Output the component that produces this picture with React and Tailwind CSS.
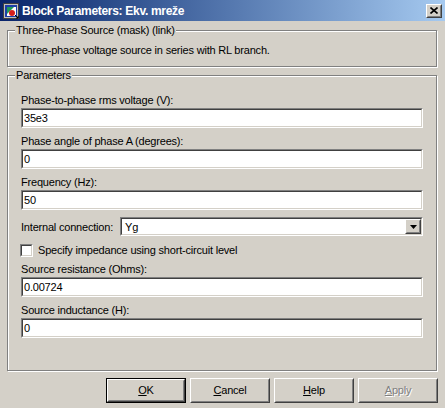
import React from 'react';

const font = { fontFamily: '"Liberation Sans", Arial, sans-serif' };

function Sunken({ className = '', children }) {
    return (
        <div className={`border border-t-[#808080] border-l-[#808080] border-r-white border-b-white ${className}`}>
            <div className="h-full border border-t-[#404040] border-l-[#404040] border-r-[#d4d0c8] border-b-[#d4d0c8] bg-white flex items-center">
                {children}
            </div>
        </div>
    );
}

function Raised({ className = '', children }) {
    return (
        <div className={`border border-t-white border-l-white border-r-[#404040] border-b-[#404040] bg-[#d4d0c8] ${className}`}>
            <div className="h-full border border-t-[#d4d0c8] border-l-[#d4d0c8] border-r-[#808080] border-b-[#808080] flex items-center justify-center">
                {children}
            </div>
        </div>
    );
}

function Field({ label, value, className = '' }) {
    return (
        <div className={className}>
            <div className="h-[15px] leading-[14px]">{label}</div>
            <Sunken className="h-[20px]">
                <span className="pl-[1px] leading-[14px]">{value}</span>
            </Sunken>
        </div>
    );
}

function Group({ title, className = '', children }) {
    return (
        <div className={`relative border border-[#808080] shadow-[inset_1px_1px_0_#fff,1px_1px_0_#fff] ${className}`}>
            <span className="absolute -top-[8px] left-[7px] px-px bg-[#d4d0c8] leading-[14px]">{title}</span>
            {children}
        </div>
    );
}

function Button({ children, isDefault, disabled }) {
    const inner = (
        <Raised className="h-full w-full">
            <span className={disabled ? 'text-[#808080] [text-shadow:1px_1px_0_#fff]' : ''}>{children}</span>
        </Raised>
    );
    return isDefault ? (
        <div className="w-[80px] h-[25px] border border-black">{inner}</div>
    ) : (
        <div className="w-[80px] h-[25px]">{inner}</div>
    );
}

function BlockIcon() {
    return (
        <svg width="16" height="16" viewBox="0 0 16 16">
            <rect x="0.5" y="0.5" width="15" height="15" fill="#c0c0c0" stroke="#404040" />
            <rect x="2" y="2" width="12" height="12" fill="#1c3fa8" />
            <rect x="4" y="4" width="9" height="9" fill="#fff" />
            <path d="M4 4 L11 4 L4 11 Z" fill="#1f9a5a" />
            <circle cx="9" cy="10" r="3" fill="#d8201c" />
            <path d="M12 12 L15 15 M13 15 L15 15 L15 13" stroke="#000" strokeWidth="1" fill="none" />
        </svg>
    );
}

export default function App() {
    return (
        <div className="w-[445px] h-[408px] bg-[#d4d0c8] text-[11px] tracking-[-0.2px] text-black flex flex-col overflow-hidden" style={font}>
            <div className="h-[21px] shrink-0 flex items-center bg-linear-to-r from-[#0a246a] to-[#a6caf0] pl-[3px] pr-[3px]">
                <BlockIcon />
                <span className="ml-[3px] text-white font-bold text-[12px] tracking-[-0.3px] leading-[14px]">Block Parameters: Ekv. mreže</span>
                <Raised className="ml-auto w-[16px] h-[14px]">
                    <svg width="8" height="7" viewBox="0 0 8 7">
                        <path d="M0.5 0.5 L7.5 6.5 M7.5 0.5 L0.5 6.5" stroke="#000" strokeWidth="1.6" />
                    </svg>
                </Raised>
            </div>

            <Group title="Three-Phase Source (mask) (link)" className="mt-[9px] ml-[7px] mr-[8px] h-[37px]">
                <div className="pl-[12px] pt-[12px] leading-[14px]">Three-phase voltage source in series with RL branch.</div>
            </Group>

            <Group title="Parameters" className="mt-[8px] ml-[7px] mr-[8px] h-[296px] px-[13px] pt-[17px]">
                <Field label="Phase-to-phase rms voltage (V):" value="35e3" />
                <Field label="Phase angle of phase A (degrees):" value="0" className="mt-[6px]" />
                <Field label="Frequency (Hz):" value="50" className="mt-[6px]" />

                <div className="mt-[7px] flex items-center">
                    <span className="w-[99px] leading-[14px]">Internal connection:</span>
                    <Sunken className="flex-1 h-[19px]">
                        <span className="pl-[3px] leading-[14px]">Yg</span>
                        <Raised className="ml-auto w-[16px] h-full">
                            <svg width="7" height="4" viewBox="0 0 7 4">
                                <path d="M0 0 L7 0 L3.5 4 Z" fill="#000" />
                            </svg>
                        </Raised>
                    </Sunken>
                </div>

                <div className="mt-[7px] flex items-center h-[14px]">
                    <Sunken className="w-[13px] h-[13px] -ml-px" />
                    <span className="ml-[5px] leading-[14px]">Specify impedance using short-circuit level</span>
                </div>

                <Field label="Source resistance (Ohms):" value="0.00724" className="mt-[5px]" />
                <Field label="Source inductance (H):" value="0" className="mt-[6px]" />
            </Group>

            <div className="mt-[7px] flex justify-end gap-[4px] pr-[7px]">
                <Button isDefault><span className="underline">O</span>K</Button>
                <Button><span className="underline">C</span>ancel</Button>
                <Button><span className="underline">H</span>elp</Button>
                <Button disabled><span className="underline">A</span>pply</Button>
            </div>
        </div>
    );
}
